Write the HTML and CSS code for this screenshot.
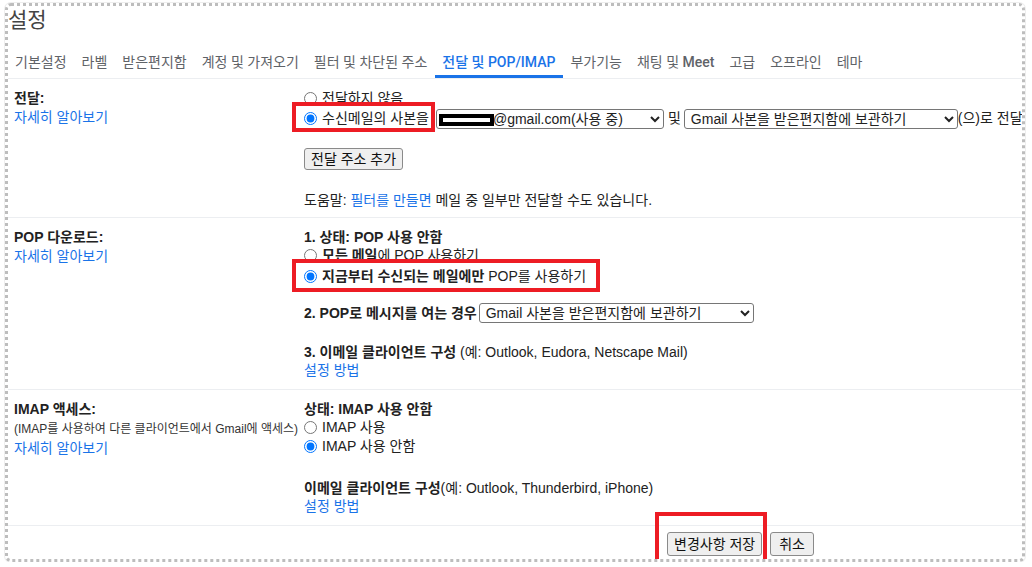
FILE: index.html
```html
<!DOCTYPE html>
<html lang="ko">
<head>
    <meta charset="UTF-8">
    <meta name="viewport" content="width=device-width, initial-scale=1.0">
    <title>설정 - 전달 및 POP/IMAP</title>
    <link rel="stylesheet" href="styles.css">
</head>
<body>
    <div class="frame">
        <h1 class="title">설정</h1>
        <div class="tabs">
            <a class="tab" href="#">기본설정</a>
            <a class="tab" href="#">라벨</a>
            <a class="tab" href="#">받은편지함</a>
            <a class="tab" href="#">계정 및 가져오기</a>
            <a class="tab" href="#">필터 및 차단된 주소</a>
            <a class="tab active" href="#">전달 및 POP/IMAP</a>
            <a class="tab" href="#">부가기능</a>
            <a class="tab" href="#">채팅 및 <span class="meet">Meet</span></a>
            <a class="tab" href="#">고급</a>
            <a class="tab" href="#">오프라인</a>
            <a class="tab" href="#">테마</a>
        </div>

        <!-- 전달 -->
        <div class="section">
            <div class="label">
                <b>전달:</b><br>
                <a class="link" href="#">자세히 알아보기</a>
            </div>
            <div class="content">
                <label class="opt"><input type="radio" name="fwd">전달하지 않음</label>
                <div class="opt opt-wide">
                    <input type="radio" name="fwd" checked>수신메일의 사본을
                    <span class="addr">
                        <select class="select select-addr">
                            <option>@gmail.com(사용 중)</option>
                        </select>
                        <span class="redact"></span>
                    </span>
                    <span class="and">및</span>
                    <select class="select select-keep">
                        <option>Gmail 사본을 받은편지함에 보관하기</option>
                    </select>(으)로 전달
                </div>
                <button class="btn btn-add">전달 주소 추가</button>
                <div class="help">도움말: <a class="link" href="#">필터를 만들면</a> 메일 중 일부만 전달할 수도 있습니다.</div>
            </div>
        </div>

        <!-- POP -->
        <div class="section section-pop">
            <div class="label">
                <b>POP 다운로드:</b><br>
                <a class="link" href="#">자세히 알아보기</a>
            </div>
            <div class="content">
                <div class="line"><b>1. 상태: POP 사용 안함</b></div>
                <label class="opt"><input type="radio" name="pop"><b>모든 메일</b>에 POP 사용하기</label>
                <label class="opt opt-now"><input type="radio" name="pop" checked><b>지금부터 수신되는 메일에만</b>&nbsp;POP를 사용하기</label>
                <div class="opt opt-wide opt-open">
                    <b>2. POP로 메시지를 여는 경우</b>
                    <select class="select select-pop">
                        <option>Gmail 사본을 받은편지함에 보관하기</option>
                    </select>
                </div>
                <div class="line line-gap"><b>3. 이메일 클라이언트 구성</b> (예: Outlook, Eudora, Netscape Mail)</div>
                <div class="line"><a class="link" href="#">설정 방법</a></div>
            </div>
        </div>

        <!-- IMAP -->
        <div class="section section-imap">
            <div class="label">
                <b>IMAP 액세스:</b><br>
                <span class="small">(IMAP를 사용하여 다른 클라이언트에서 Gmail에 액세스)</span><br>
                <a class="link" href="#">자세히 알아보기</a>
            </div>
            <div class="content">
                <div class="line"><b>상태: IMAP 사용 안함</b></div>
                <label class="opt"><input type="radio" name="imap">IMAP 사용</label>
                <label class="opt"><input type="radio" name="imap" checked>IMAP 사용 안함</label>
                <div class="line line-client"><b>이메일 클라이언트 구성</b>(예: Outlook, Thunderbird, iPhone)</div>
                <div class="line"><a class="link" href="#">설정 방법</a></div>
            </div>
        </div>

        <div class="actions">
            <button class="btn btn-save">변경사항 저장</button>
            <button class="btn btn-cancel">취소</button>
        </div>

        <!-- 빨간 표시 -->
        <div class="mark mark-fwd"></div>
        <div class="mark mark-pop"></div>
        <div class="mark mark-save"></div>
    </div>
</body>
</html>
```

FILE: styles.css
```css
body {
    margin: 0;
    padding: 3px 0 0 5px;
    font-family: "Liberation Sans", "Noto Sans CJK KR", sans-serif;
    font-size: 14px;
    color: #222;
    background: #fff;
}
.frame {
    position: relative;
    width: 1020px;
    height: 559px;
    box-sizing: border-box;
    border: 3px dotted #bdbdbd;
    border-radius: 6px;
    box-shadow: 0 0 0 1px #eeeeee;
    overflow: hidden;
}
.title {
    margin: 0 0 6px;
    font-size: 21px;
    font-weight: 400;
    line-height: 28px;
    color: #444;
}
.tabs {
    display: flex;
    border-bottom: 1px solid #eceef1;
}
.tab {
    padding: 13px 7.5px 4px;
    line-height: 18px;
    color: #5f6368;
    text-decoration: none;
    border-bottom: 3px solid transparent;
    white-space: nowrap;
    font-family: Roboto, "Noto Sans CJK KR", sans-serif;
}
.tab:first-child {
    padding-left: 7px;
}
.tab.active {
    color: #1a73e8;
    border-bottom-color: #1a73e8;
    font-weight: 500;
}
.meet {
    font-weight: 500;
}
.section {
    display: grid;
    grid-template-columns: 290px 1fr;
    padding: 10px 0 7px 6px;
    border-bottom: 1px solid #eceef1;
    line-height: 19px;
}
.section-pop,
.section-imap {
    padding-bottom: 10px;
}
.link {
    color: #1a73e8;
    text-decoration: none;
}
.small {
    font-size: 12px;
    color: #333;
}
.content {
    white-space: nowrap;
}
.opt {
    display: flex;
    align-items: center;
    height: 19px;
}
.opt input {
    margin: 0 5px 0 0;
    width: 13px;
    height: 13px;
}
.opt-wide {
    height: 21px;
}
.opt-now {
    margin-top: 2px;
}
.opt-open {
    height: 20px;
    margin-top: 17px;
}
.line {
    line-height: 18px;
}
.line-gap {
    margin-top: 20px;
}
.line-client {
    margin-top: 23px;
}
.addr {
    position: relative;
    display: inline-flex;
    margin-left: 7px;
}
.redact {
    position: absolute;
    left: 3px;
    top: 5px;
    width: 55px;
    height: 12px;
    background: #000;
}
.redact::after {
    content: "";
    position: absolute;
    left: 4px;
    right: 4px;
    top: 4px;
    bottom: 4px;
    background: #fff;
}
.select {
    height: 20px;
    font-family: "Liberation Sans", "Noto Sans CJK KR", sans-serif;
    font-size: 14px;
    color: #222;
    border: 1px solid #767676;
    border-radius: 3px;
    background: #fff;
    padding: 0 2px;
}
.select-addr {
    width: 228px;
    padding-left: 52px;
}
.select-keep {
    width: 274px;
}
.select-pop {
    width: 275px;
    margin-left: 2px;
}
.and {
    margin: 0 3px 0 4px;
}
.btn {
    font-family: "Liberation Sans", "Noto Sans CJK KR", sans-serif;
    font-size: 14px;
    line-height: 18px;
    color: #111;
    background: #efefef;
    border: 1px solid #8a8a8a;
    border-radius: 3px;
    padding: 1px 6px;
}
.btn-add {
    display: block;
    margin-top: 19px;
}
.help {
    margin-top: 21px;
}
.actions {
    display: flex;
    gap: 8px;
    padding: 6px 0 0 659px;
}
.btn-save {
    padding: 2px 6px;
}
.btn-cancel {
    padding: 2px 8px;
}
.mark {
    position: absolute;
    box-sizing: border-box;
    border: 4px solid #ed1c24;
}
.mark-fwd {
    left: 284px;
    top: 96px;
    width: 143px;
    height: 30px;
}
.mark-pop {
    left: 284px;
    top: 253px;
    width: 308px;
    height: 33px;
}
.mark-save {
    left: 647px;
    top: 506px;
    width: 112px;
    height: 60px;
    border-bottom: none;
}
```
